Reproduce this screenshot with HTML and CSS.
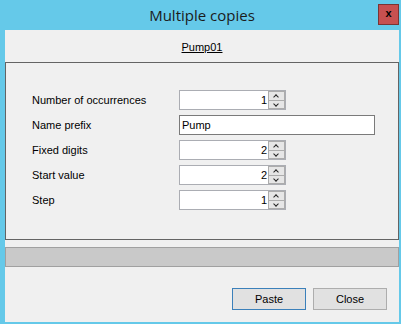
FILE: index.html
```html
<!DOCTYPE html>
<html lang="en">
<head>
    <meta charset="UTF-8">
    <title>Multiple copies</title>
    <link rel="stylesheet" href="styles.css">
</head>
<body>
    <div class="window">
        <div class="titlebar">
            <span></span>
            <span class="title">Multiple copies</span>
            <span class="close-x">x</span>
        </div>
        <div class="client">
            <div class="header"><span class="object-name">Pump01</span></div>
            <div class="group">
                <div class="row">
                    <span class="label">Number of occurrences</span>
                    <div class="num"><span class="val">1</span><div class="spin"><span class="up"></span><span class="down"></span></div></div>
                </div>
                <div class="row">
                    <span class="label">Name prefix</span>
                    <div class="text">Pump</div>
                </div>
                <div class="row">
                    <span class="label">Fixed digits</span>
                    <div class="num"><span class="val">2</span><div class="spin"><span class="up"></span><span class="down"></span></div></div>
                </div>
                <div class="row">
                    <span class="label">Start value</span>
                    <div class="num"><span class="val">2</span><div class="spin"><span class="up"></span><span class="down"></span></div></div>
                </div>
                <div class="row">
                    <span class="label">Step</span>
                    <div class="num"><span class="val">1</span><div class="spin"><span class="up"></span><span class="down"></span></div></div>
                </div>
            </div>
            <div class="progress"></div>
            <div class="buttons">
                <button class="btn default">Paste</button>
                <button class="btn">Close</button>
            </div>
        </div>
    </div>
</body>
</html>
```

FILE: styles.css
```css
body {
    margin: 0;
    background-color: #65c9e9;
    font-family: "Liberation Sans", Arial, sans-serif;
    font-size: 11px;
    color: #000;
}

.window {
    width: 401px;
    height: 324px;
    display: flex;
    flex-direction: column;
}

.titlebar {
    height: 30px;
    display: grid;
    grid-template-columns: 1fr auto 1fr;
    align-items: start;
}

.title {
    font-family: "Open Sans", "Noto Sans", sans-serif;
    font-size: 15px;
    color: #1b1b1b;
    line-height: 30px;
    padding-left: 3px;
}

.close-x {
    justify-self: end;
    margin: 4px 2px 0 0;
    width: 19px;
    height: 19px;
    background-color: #c75050;
    border: 1px solid #7a3434;
    color: #000;
    font-weight: bold;
    font-size: 11px;
    line-height: 17px;
    text-align: center;
}

.client {
    flex: 1;
    margin: 0 2px 2px 5px;
    background-color: #f0f0f0;
    display: flex;
    flex-direction: column;
}

.header {
    height: 32px;
    display: flex;
    align-items: center;
    justify-content: center;
}

.object-name {
    text-decoration: underline;
    margin-top: 2px;
}

.group {
    height: 178px;
    box-sizing: border-box;
    border: 1px solid #646464;
    padding: 27px 0 0 26px;
    display: flex;
    flex-direction: column;
    gap: 5px;
}

.row {
    display: flex;
    align-items: center;
    height: 20px;
}

.label {
    width: 147px;
}

.num {
    width: 107px;
    height: 20px;
    box-sizing: border-box;
    border: 1px solid #abadb3;
    background-color: #fff;
    display: flex;
}

.val {
    flex: 1;
    text-align: right;
    padding-right: 1px;
    line-height: 18px;
}

.spin {
    width: 17px;
    display: flex;
    flex-direction: column;
}

.spin span {
    flex: 1;
    background-color: #e6e6e6;
    border: 1px solid #acacac;
    position: relative;
}

.spin .up {
    border-bottom: none;
}

.spin span::after {
    content: "";
    position: absolute;
    left: 5px;
    width: 3px;
    height: 3px;
    border-left: 1px solid #222;
    border-top: 1px solid #222;
    transform: rotate(45deg);
}

.spin .up::after {
    top: 3px;
}

.spin .down::after {
    top: 1px;
    transform: rotate(225deg);
}

.text {
    width: 196px;
    height: 20px;
    box-sizing: border-box;
    border: 1px solid #7a7a7a;
    background-color: #fff;
    padding-left: 2px;
    line-height: 18px;
}

.progress {
    height: 20px;
    box-sizing: border-box;
    margin-top: 7px;
    border: 1px solid #a0a0a0;
    background-color: #c9c9c9;
}

.buttons {
    display: flex;
    justify-content: flex-end;
    gap: 7px;
    margin: 21px 12px 0 0;
}

.btn {
    width: 74px;
    height: 22px;
    box-sizing: border-box;
    border: 1px solid #adadad;
    background-color: #e1e1e1;
    font-family: "Liberation Sans", Arial, sans-serif;
    font-size: 11px;
    color: #000;
    padding: 0;
}

.btn.default {
    border-color: #3b80ba;
}
```
